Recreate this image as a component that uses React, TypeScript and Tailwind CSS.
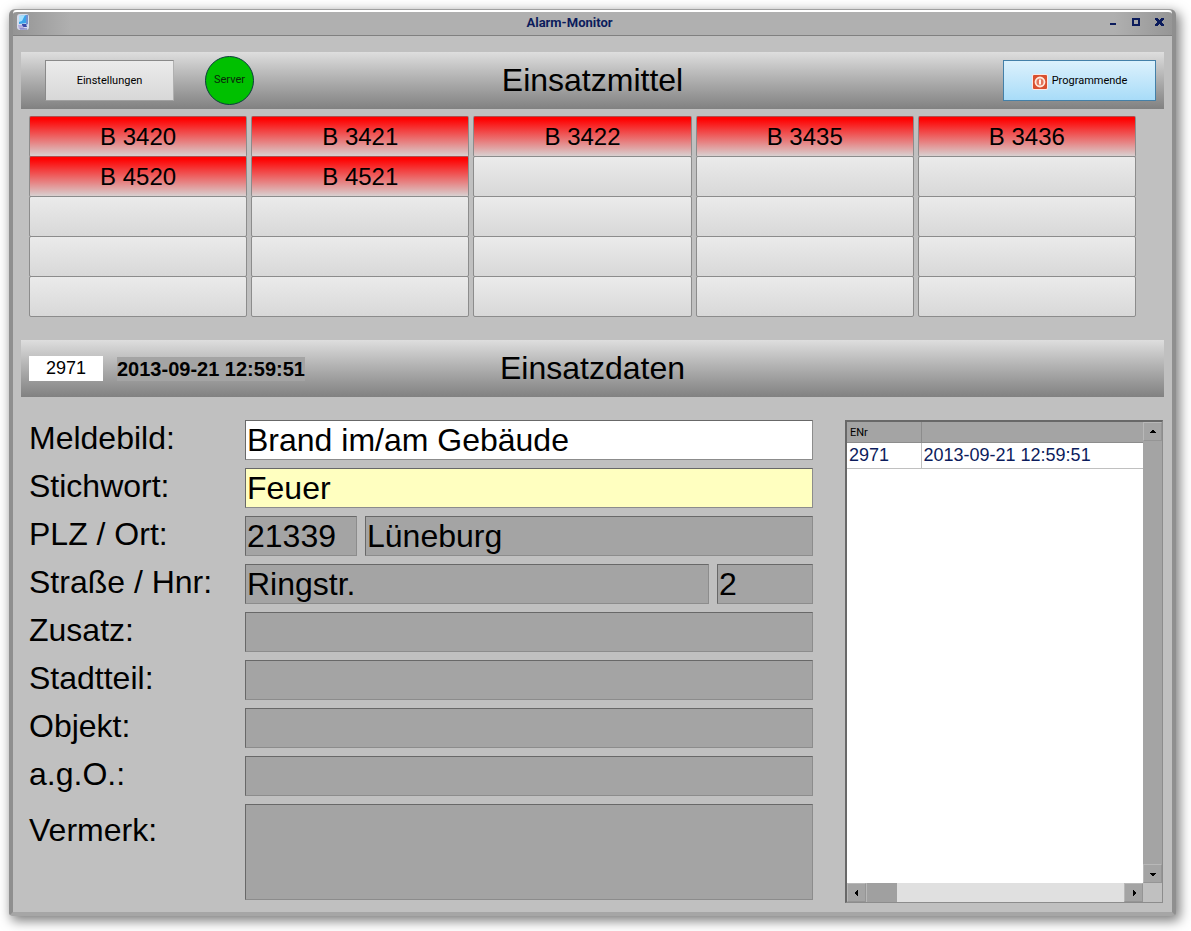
import React, { useState } from 'react';

interface Incident {
  id: string;
  time: string;
}

const UNITS = ['B 3420', 'B 3421', 'B 3422', 'B 3435', 'B 3436', 'B 4520', 'B 4521'];
const SLOT_COUNT = 25;

const INCIDENTS: Incident[] = [{ id: '2971', time: '2013-09-21 12:59:51' }];

const MonitorIcon: React.FC = () => (
  <svg width="14" height="17" viewBox="0 0 14 17" aria-hidden="true">
    <rect x="1" y="0" width="12" height="16" rx="3" fill="#d6dcec" />
    <path d="M3 2l8-1v8l-8 1z" fill="#3aa4ea" />
    <path d="M3 2l6-1-3 6-3 1z" fill="#a6e2ff" />
    <path d="M10 1h2v9l-2 1z" fill="#6f8fd0" />
    <path d="M6 10h4l1 3H6z" fill="#3c4aa8" />
    <path d="M2 11h4l3 4H3z" fill="#b5b0e0" />
    <path d="M4 15h7" stroke="#6b6cb8" strokeWidth="1" />
  </svg>
);

const PowerIcon: React.FC = () => (
  <svg width="16" height="16" viewBox="0 0 16 16" aria-hidden="true">
    <rect x="0" y="0" width="16" height="16" rx="2" fill="#fbe9e4" />
    <rect x="1" y="1" width="14" height="14" rx="1" fill="#d9502f" />
    <circle cx="8" cy="8" r="4.5" fill="#e2745a" stroke="#ffe9dc" strokeWidth="1.8" />
    <path d="M8 5.5v5" stroke="#fff4ec" strokeWidth="2" />
  </svg>
);

type Direction = 'up' | 'down' | 'left' | 'right';

const ARROWS: Record<Direction, string> = {
  up: 'M3 2h2v1h1v1h1v1H1V4h1V3h1z',
  down: 'M1 3h6v1H6v1H5v1H3V5H2V4H1z',
  left: 'M5 1v6H4V6H3V5H2V3h1V2h1V1z',
  right: 'M3 1v6h1V6h1V5h1V3H5V2H4V1z',
};

const ScrollButton: React.FC<{ direction: Direction; label: string }> = ({ direction, label }) => (
  <button
    type="button"
    aria-label={label}
    className="flex size-[19px] shrink-0 items-center justify-center border border-t-[#b8b8b8] border-l-[#b8b8b8] border-r-[#959595] border-b-[#959595] bg-[#a4a4a4]"
  >
    <svg width="8" height="8" viewBox="0 0 8 8" shapeRendering="crispEdges">
      <path d={ARROWS[direction]} fill="#000" />
    </svg>
  </button>
);

const SectionBar: React.FC<{ title: string; left: React.ReactNode; right?: React.ReactNode }> = ({ title, left, right }) => (
  <header className="grid h-[57px] grid-cols-[1fr_auto_1fr] items-center bg-linear-to-b from-[#dedede] to-[#818181] px-2">
    <div className="flex items-center">{left}</div>
    <h2 className="pb-0.5 text-[32px] leading-9">{title}</h2>
    <div className="flex justify-end">{right}</div>
  </header>
);

const FIELD =
  'h-10 min-w-0 border border-t-[#686868] border-l-[#686868] border-r-[#8c8c8c] border-b-[#8c8c8c] px-px text-[32px] leading-9 outline-none';

const Row: React.FC<{ id: string; label: string; children: React.ReactNode }> = ({ id, label, children }) => (
  <div className="flex">
    <label htmlFor={id} className="w-[216px] shrink-0 text-[32px] leading-9">
      {label}
    </label>
    <div className="flex min-w-0 flex-1 gap-2">{children}</div>
  </div>
);

const App: React.FC = () => {
  const [data, setData] = useState({
    meldebild: 'Brand im/am Gebäude',
    stichwort: 'Feuer',
    plz: '21339',
    ort: 'Lüneburg',
    strasse: 'Ringstr.',
    hnr: '2',
    zusatz: '',
    stadtteil: '',
    objekt: '',
    ago: '',
    vermerk: '',
  });

  const bind = (key: keyof typeof data) => ({
    id: key,
    value: data[key],
    onChange: (e: React.ChangeEvent<HTMLInputElement | HTMLTextAreaElement>) =>
      setData(prev => ({ ...prev, [key]: e.target.value })),
  });

  return (
    <div className="min-h-screen bg-white pt-[9px] pr-[15px] pb-[15px] pl-[9px] font-['Liberation_Sans',Arial,sans-serif] text-black">
      <div className="rounded-t-md rounded-b-sm border-x-4 border-b-4 border-t border-x-[#8f8f8f] border-t-[#a0a0a0] border-b-[#a6a6a6] bg-[#c0c0c0] shadow-[3px_4px_12px_1px_rgba(0,0,0,0.5)]">
        {/* Title bar */}
        <div className="flex h-[26px] items-center rounded-t-sm border-t-2 border-b border-t-white border-b-[#808080] bg-[linear-gradient(to_right,#949494,#b0b0b0_5%,#b0b0b0_95%,#969696)] pr-2 pb-0.5 pl-[3px] text-[#0c1c5c]">
          <MonitorIcon />
          <h1 className="flex-1 text-center font-['Roboto',sans-serif] text-[13px] leading-4 font-bold">Alarm-Monitor</h1>
          <div className="flex gap-[14px]">
            <button type="button" aria-label="Minimieren">
              <svg width="9" height="9" viewBox="0 0 9 9" shapeRendering="crispEdges">
                <path d="M1 5h6v2H1z" fill="currentColor" />
              </svg>
            </button>
            <button type="button" aria-label="Maximieren">
              <svg width="9" height="9" viewBox="0 0 9 9" shapeRendering="crispEdges">
                <path d="M0 0h8v8H0zM2 2v4h4V2z" fill="currentColor" fillRule="evenodd" />
              </svg>
            </button>
            <button type="button" aria-label="Schließen">
              <svg width="9" height="9" viewBox="0 0 9 9" shapeRendering="crispEdges">
                <path d="M0 0h3v1h1v1h1V1h1V0h3v2H8v1H7v2h1v1h1v2H6V7H5V6H4v1H3v1H0V6h1V5h1V3H1V2H0z" fill="currentColor" />
              </svg>
            </button>
          </div>
        </div>

        <main className="px-2 pt-4 pb-[9px]">
          <SectionBar
            title="Einsatzmittel"
            left={
              <div className="flex items-center gap-[31px] pl-4">
                <button
                  type="button"
                  className="h-[41px] w-[129px] border border-t-[#8a8a8a] border-l-[#8a8a8a] border-r-[#b0b0b0] border-b-[#a0a0a0] bg-linear-to-b from-[#ebebeb] to-[#d8d8d8] pt-0.5 font-['Roboto',sans-serif] text-[11px]"
                >
                  Einstellungen
                </button>
                <div className="flex size-[49px] items-center justify-center rounded-full border border-[#0c3c3c] bg-[#00c000] font-['Roboto',sans-serif] text-[11px] text-[#0a280a]">
                  Server
                </div>
              </div>
            }
            right={
              <button
                type="button"
                className="flex h-[41px] w-[153px] items-center justify-center gap-1 border border-[#4480a8] bg-linear-to-b from-[#dcf1fc] to-[#a8dcf8] pt-0.5 font-['Roboto',sans-serif] text-[11px]"
              >
                <PowerIcon />
                Programmende
              </button>
            }
          />

          <ul className="mt-[7px] grid auto-rows-[40px] grid-cols-5 gap-x-1 pr-7 pb-px pl-2 text-center text-2xl leading-10">
            {Array.from({ length: SLOT_COUNT }, (_, i) => (
              <li
                key={i}
                className={
                  i < UNITS.length
                    ? 'h-[41px] rounded-xs border border-[#8c8c8c] border-t-[#b05050] bg-linear-to-b/srgb from-[#ff0000] from-5% to-[#d8d0d0]'
                    : 'h-[41px] rounded-xs border border-[#8c8c8c] bg-linear-to-b from-[#ebebeb] to-[#d8d8d8]'
                }
              >
                {UNITS[i]}
              </li>
            ))}
          </ul>

          <div className="mt-[23px]">
            <SectionBar
              title="Einsatzdaten"
              left={
                <div className="flex items-center gap-[14px]">
                  <input
                    aria-label="Einsatznummer"
                    readOnly
                    value={INCIDENTS[0].id}
                    className="h-[25px] w-[74px] bg-white text-center text-[18px] outline-none"
                  />
                  <time className="bg-[#a4a4a4] text-[20px] leading-6 font-bold">{INCIDENTS[0].time}</time>
                </div>
              }
            />
          </div>

          <div className="mt-[23px] flex gap-8 pr-px pl-2">
            <form className="flex min-w-0 flex-1 flex-col gap-2">
              <Row id="meldebild" label="Meldebild:">
                <input {...bind('meldebild')} className={`${FIELD} w-full bg-white`} />
              </Row>
              <Row id="stichwort" label="Stichwort:">
                <input {...bind('stichwort')} className={`${FIELD} w-full bg-[#ffffc0]`} />
              </Row>
              <Row id="plz" label="PLZ / Ort:">
                <input {...bind('plz')} className={`${FIELD} w-28 bg-[#a4a4a4]`} />
                <input {...bind('ort')} aria-label="Ort" className={`${FIELD} flex-1 bg-[#a4a4a4]`} />
              </Row>
              <Row id="strasse" label="Straße / Hnr:">
                <input {...bind('strasse')} className={`${FIELD} flex-1 bg-[#a4a4a4]`} />
                <input {...bind('hnr')} aria-label="Hausnummer" className={`${FIELD} w-24 bg-[#a4a4a4]`} />
              </Row>
              <Row id="zusatz" label="Zusatz:">
                <input {...bind('zusatz')} className={`${FIELD} w-full bg-[#a4a4a4]`} />
              </Row>
              <Row id="stadtteil" label="Stadtteil:">
                <input {...bind('stadtteil')} className={`${FIELD} w-full bg-[#a4a4a4]`} />
              </Row>
              <Row id="objekt" label="Objekt:">
                <input {...bind('objekt')} className={`${FIELD} w-full bg-[#a4a4a4]`} />
              </Row>
              <Row id="ago" label="a.g.O.:">
                <input {...bind('ago')} className={`${FIELD} w-full bg-[#a4a4a4]`} />
              </Row>
              <div className="flex">
                <label htmlFor="vermerk" className="w-[216px] shrink-0 pt-2 text-[32px] leading-9">
                  Vermerk:
                </label>
                <textarea
                  {...bind('vermerk')}
                  className="h-24 min-w-0 flex-1 resize-none border border-t-[#686868] border-l-[#686868] border-r-[#8c8c8c] border-b-[#8c8c8c] bg-[#a4a4a4] px-px text-[32px] leading-9 outline-none"
                />
              </div>
            </form>

            {/* Incident list with its own scrollbars */}
            <div className="flex h-[483px] w-[318px] shrink-0 flex-col border border-t-2 border-l-2 border-t-[#686868] border-l-[#686868] border-r-[#8c8c8c] border-b-[#8c8c8c] bg-white">
              <div className="flex min-h-0 flex-1">
                <div className="min-w-0 flex-1">
                  <table className="w-full table-fixed border-collapse text-left">
                    <thead className="bg-[#a4a4a4]">
                      <tr className="h-5 border-b border-[#8c8c8c]">
                        <th className="w-[74px] border-r border-[#8c8c8c] pt-0.5 pl-[3px] font-['Roboto',sans-serif] text-[11px] leading-4 font-normal">
                          ENr
                        </th>
                        <th aria-label="Zeitpunkt" />
                      </tr>
                    </thead>
                    <tbody className="text-[18px] leading-6 text-[#0c1c5c]">
                      {INCIDENTS.map(incident => (
                        <tr key={incident.id} className="h-[26px] border-b border-[#c0c0c0]">
                          <td className="border-r border-[#c0c0c0] pl-0.5">{incident.id}</td>
                          <td className="pl-0.5">{incident.time}</td>
                        </tr>
                      ))}
                    </tbody>
                  </table>
                </div>
                <div className="flex w-[19px] flex-col justify-between bg-[#a4a4a4]">
                  <ScrollButton direction="up" label="Nach oben" />
                  <ScrollButton direction="down" label="Nach unten" />
                </div>
              </div>
              <div className="flex h-[19px] bg-[#e0e0e0]">
                <ScrollButton direction="left" label="Nach links" />
                <div className="w-[31px] border-l border-[#b8b8b8] bg-[#a0a0a0]" />
                <div className="flex-1" />
                <ScrollButton direction="right" label="Nach rechts" />
                <div className="w-[19px] bg-[#c0c0c0]" />
              </div>
            </div>
          </div>
        </main>
      </div>
    </div>
  );
};

export default App;
